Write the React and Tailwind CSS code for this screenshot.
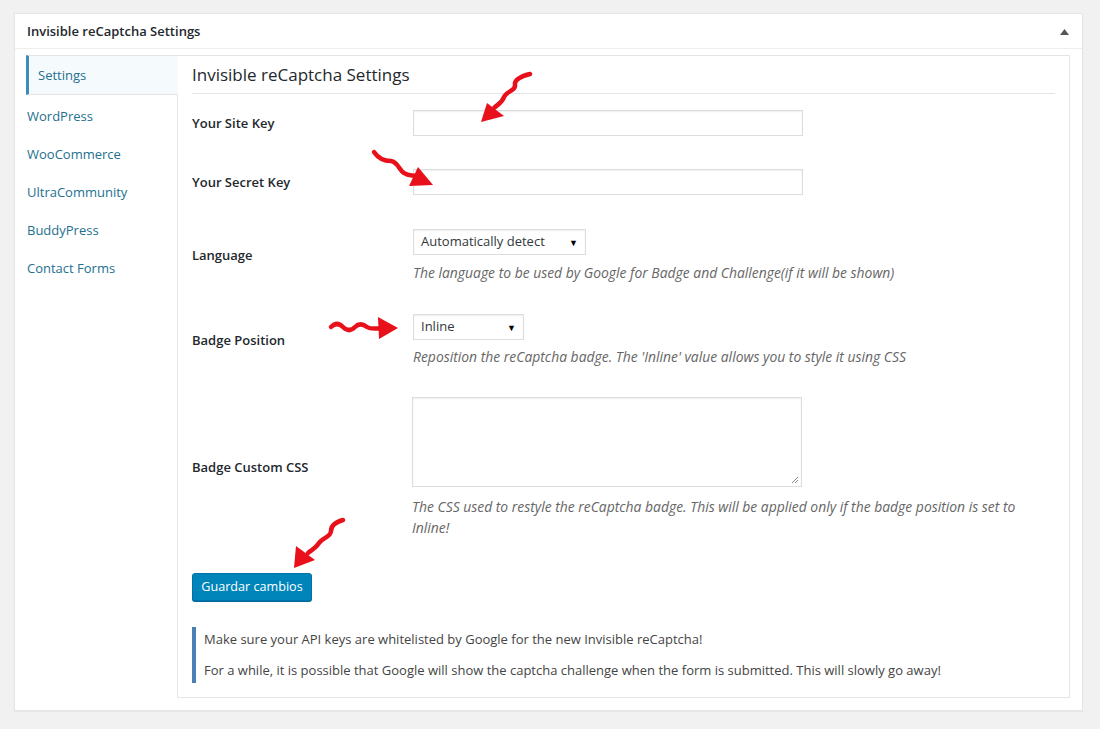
import React from 'react';

const tabs = ['WordPress', 'WooCommerce', 'UltraCommunity', 'BuddyPress', 'Contact Forms'];

const Select = ({ value, width }) => (
  <div
    className={`flex h-[26px] items-center justify-between border border-[#ddd] bg-white pl-[7px] pr-[7px] text-[13px] text-[#32373c] shadow-[inset_0_1px_2px_rgba(0,0,0,0.07)] ${width}`}
  >
    <span>{value}</span>
    <span className="text-[9px] leading-none text-black">▼</span>
  </div>
);

const Desc = ({ children, className = '' }) => (
  <p className={`max-w-[625px] text-[13.9px] italic leading-[21px] text-[#666] ${className}`}>{children}</p>
);

// red squiggle annotations drawn over the form
const Arrows = () => (
  <svg className="pointer-events-none absolute left-0 top-0" width="1100" height="729" viewBox="0 0 1100 729">
    <g fill="none" stroke="#e8101a" strokeWidth="4.5" strokeLinecap="round" strokeLinejoin="round">
      <path d="M530 74 C522 76 514 79 515 85 C516 91 506 91 504 97 C502 103 498 104 494 108" />
      <path d="M374 152 C378 158 384 161 391 161 C398 162 399 170 404 173 C408 176 412 175 416 176" />
      <path d="M331 327 C335 323 339 323 343 327 C347 331 351 331 355 327 C359 323 363 324 367 327 C370 329 374 329 382 328" />
      <path d="M343 520 C336 522 331 526 331 531 C331 537 322 538 319 543 C316 548 313 549 308 553" />
    </g>
    <g fill="#e8101a">
      <polygon points="481,122 487,103 504,116" />
      <polygon points="433,185 409,186 418,167" />
      <polygon points="398,328 378,317 379,339" />
      <polygon points="294,568 296,546 315,560" />
    </g>
  </svg>
);

export default function App() {
  return (
    <div
      className="relative min-h-[729px] bg-[#f1f1f1] pl-[14px] pt-[13px] text-[13px] text-[#444]"
      style={{ fontFamily: '"Open Sans", "Noto Sans", sans-serif' }}
    >
      <div className="w-[1069px] border border-[#e5e5e5] bg-white shadow-[0_1px_1px_rgba(0,0,0,0.04)]">
        {/* postbox header */}
        <div className="flex h-[35px] items-center justify-between border-b border-[#eee] pl-[12px] pr-[12px] pt-[1px]">
          <h2 className="text-[13px] font-semibold text-[#23282d]">Invisible reCaptcha Settings</h2>
          <svg width="9" height="6" viewBox="0 0 9 6" className="mr-[1px]">
            <polygon points="4.5,0 9,6 0,6" fill="#555" />
          </svg>
        </div>

        <div className="flex pb-[12px] pl-[11px] pr-[12px] pt-[6px]">
          {/* tabs */}
          <div className="w-[151px] shrink-0">
            <div className="relative z-10 -mr-px flex h-[40px] items-center border-y border-l-[3px] border-y-[#e5e5e5] border-l-[#3c8dbc] bg-[#f5fafd] pl-[9px] pt-[1px] text-[#23708f]">
              Settings
            </div>
            <div className="pt-[3px]">
              {tabs.map((t) => (
                <div key={t} className="flex h-[38px] items-center pl-[1px] text-[#23708f]">
                  {t}
                </div>
              ))}
            </div>
          </div>

          {/* settings panel */}
          <div className="flex-1 border border-[#e5e5e5] px-[14px] pb-[14px]">
            <h3 className="flex h-[38px] items-center border-b border-[#e5e5e5] pt-[1px] text-[17px] text-[#23282d]">
              Invisible reCaptcha Settings
            </h3>

            <div className="flex items-center pb-[16px] pt-[16px]">
              <div className="w-[221px] pt-[1px] font-semibold text-[#23282d]">Your Site Key</div>
              <div className="h-[26px] w-[390px] border border-[#ddd] bg-white shadow-[inset_0_1px_2px_rgba(0,0,0,0.07)]" />
            </div>

            <div className="flex items-center pb-[17px] pt-[17px]">
              <div className="w-[221px] pt-[1px] font-semibold text-[#23282d]">Your Secret Key</div>
              <div className="h-[26px] w-[390px] border border-[#ddd] bg-white shadow-[inset_0_1px_2px_rgba(0,0,0,0.07)]" />
            </div>

            <div className="flex items-center pb-[14px] pt-[17px]">
              <div className="w-[221px] font-semibold text-[#23282d]">Language</div>
              <div>
                <Select value="Automatically detect" width="w-[173px]" />
                <Desc className="mt-[7px]">The language to be used by Google for Badge and Challenge(if it will be shown)</Desc>
              </div>
            </div>

            <div className="flex items-center pb-[15px] pt-[17px]">
              <div className="w-[221px] font-semibold text-[#23282d]">Badge Position</div>
              <div>
                <Select value="Inline" width="w-[111px]" />
                <Desc className="mt-[6px]">Reposition the reCaptcha badge. The 'Inline' value allows you to style it using CSS</Desc>
              </div>
            </div>

            <div className="flex items-center pb-[35px] pt-[15px]">
              <div className="w-[220px] shrink-0 font-semibold text-[#23282d]">Badge Custom CSS</div>
              <div className="flex-1">
                <div className="relative h-[90px] w-[390px] border border-[#ddd] bg-white shadow-[inset_0_1px_2px_rgba(0,0,0,0.07)]">
                  <svg width="8" height="8" viewBox="0 0 8 8" className="absolute bottom-[2px] right-[2px]">
                    <path d="M1 7 L7 1 M4 7 L7 4" stroke="#888" strokeWidth="1" />
                  </svg>
                </div>
                <Desc className="mt-[9px]">
                  The CSS used to restyle the reCaptcha badge. This will be applied only if the badge position is set to Inline!
                </Desc>
              </div>
            </div>

            <button className="h-[28px] w-[120px] rounded-[3px] border border-[#0073aa] bg-[#0085ba] text-[12.6px] text-white shadow-[0_1px_0_#006799]">
              Guardar cambios
            </button>

            <div className="mt-[26px] border-l-4 border-[#4a80b5] py-[2px] pl-[8px]">
              <p className="leading-[21px]">Make sure your API keys are whitelisted by Google for the new Invisible reCaptcha!</p>
              <p className="mt-[10px] leading-[21px]">For a while, it is possible that Google will show the captcha challenge when the form is submitted. This will slowly go away!</p>
            </div>
          </div>
        </div>
      </div>
      <Arrows />
    </div>
  );
}
